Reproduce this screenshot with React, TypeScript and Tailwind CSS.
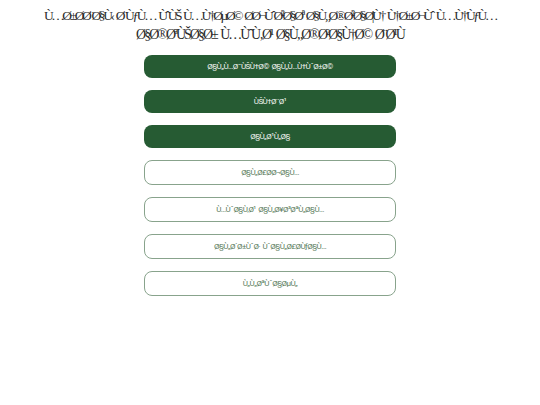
import React from "react";

const filled = [
  "Ø§Ù„Ù…Ø¯ÙŠÙ†Ø© Ø§Ù„Ù…Ù†ÙˆØ±Ø©",
  "ÙŠÙ†Ø¨Ø¹",
  "Ø§Ù„Ø¹Ù„Ø§",
];

const outline = [
  "Ø§Ù„Ø£Ø\u00ADØ¬Ø§Ù…",
  "Ù…ÙˆØ§Ù‚Ø¹ Ø§Ù„Ø¥Ø³ØªÙ„Ø§Ù…",
  "Ø§Ù„Ø´Ø±ÙˆØ· ÙˆØ§Ù„Ø£Ø\u00ADÙƒØ§Ù…",
  "Ù„Ù„ØªÙˆØ§ØµÙ„",
];

export default function App() {
  return (
    <div className="w-[540px] h-[405px] bg-white flex flex-col items-center">
      <h1
        className="pt-[6px] text-center text-[14px] leading-[19px] whitespace-nowrap text-[#2a2a2a] font-normal [word-spacing:2px]"
        style={{ fontFamily: '"Liberation Serif", serif' }}
      >
        <span className="block text-[13.5px] tracking-[-2.4px]">
          {"Ù…Ø±Ø\u00ADØ¨Ø§Ù‹ Ø¨ÙƒÙ… ÙˆÙŠ Ù…Ù†ØµØ© Ø\u00ADØ¬ÙˆØ²Ø§Øª Ø§Ù„Ø®Ø²Ø§Ø¦Ù† Ù†Ø±Ø¬Ùˆ Ù…Ù†ÙƒÙ…"}
        </span>
        <span className="block tracking-[-2px]">
          {"Ø§Ø®ØªÙŠØ§Ø± Ù…ÙˆÙ‚Ø¹ Ø§Ù„Ø®Ø²Ø§Ù†Ø© Ø¨Ø¹Ù"}
        </span>
      </h1>
      <div className="mt-[11px] w-[252px] flex flex-col gap-[12px] font-['Roboto',sans-serif]">
        {filled.map((t) => (
          <button
            key={t}
            className="h-[23px] w-full rounded-[8px] bg-[#265b33] text-[#f2f5f2] text-[8px] tracking-[-0.55px] [word-spacing:1px] flex items-center justify-center"
          >
            {t}
          </button>
        ))}
        {outline.map((t) => (
          <button
            key={t}
            className="h-[25px] w-full rounded-[8px] border-[1.5px] border-[#88a38c] bg-white text-[#5b7d60] text-[8px] tracking-[-0.55px] [word-spacing:1px] flex items-center justify-center"
          >
            {t}
          </button>
        ))}
      </div>
    </div>
  );
}
